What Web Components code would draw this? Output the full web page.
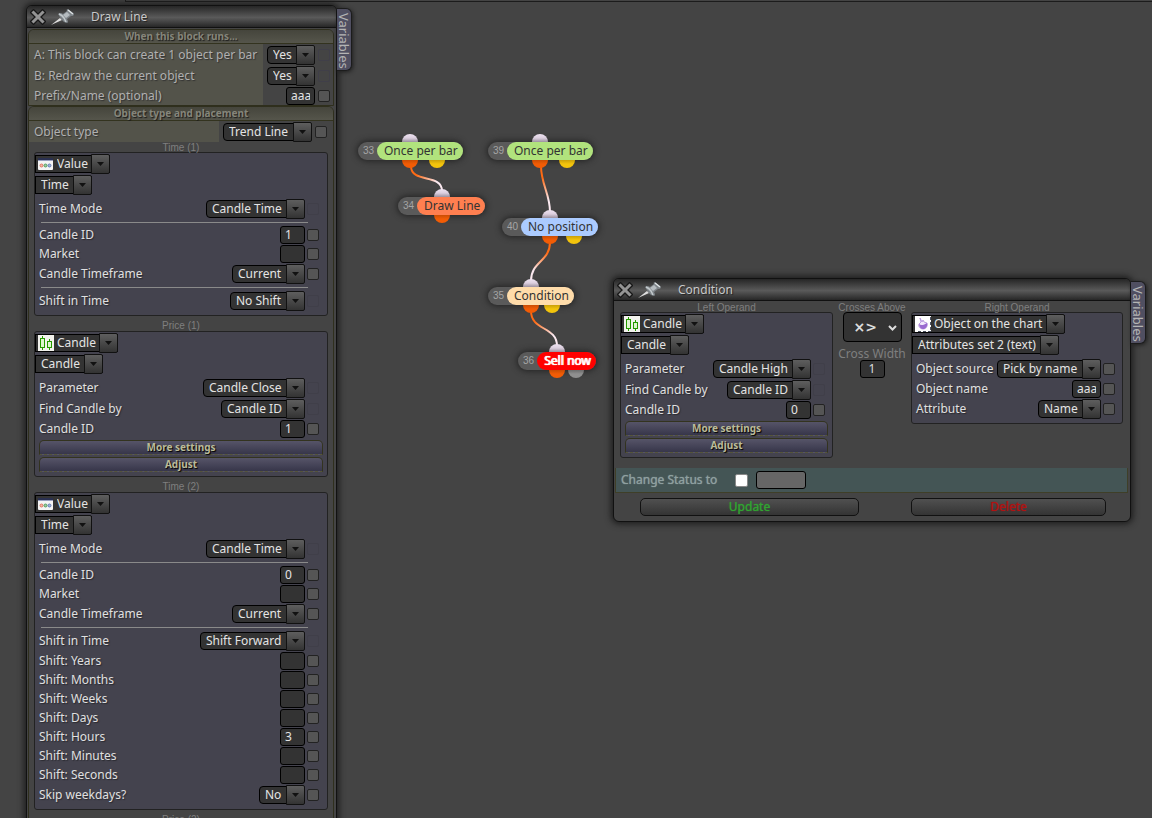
<!DOCTYPE html>
<html lang="en">
<head>
<meta charset="utf-8">
<title>Block editor</title>
<style>
  html, body { margin: 0; height: 100%; background: #444; }
  body { font: 12px/18px "Noto Sans", "Open Sans", sans-serif; color: #e0e0e0; overflow: hidden; }
</style>
</head>
<body>
<fb-desktop></fb-desktop>

<script>
const define = (name, css, render) => customElements.define(name, class extends HTMLElement {
  connectedCallback() {
    if (this.shadowRoot) return;
    const root = this.attachShadow({ mode: 'open' });
    const tpl = document.createElement('template');
    tpl.innerHTML = `<style>*{box-sizing:border-box}:host{box-sizing:border-box}${css}</style>${render(this)}`;
    root.append(tpl.content.cloneNode(true));
  }
});
const attr = (el, name, fallback = '') => el.getAttribute(name) ?? fallback;

const ICONS = {
  value: `<svg width="15" height="12" viewBox="0 0 15 12"><rect width="15" height="12" rx="1" fill="#f4f4f4"/><rect width="15" height="3" fill="#2a3050"/><rect y="2" width="15" height="1" fill="#9aa0c0"/><circle cx="3.5" cy="7.5" r="1.5" fill="#f6b5a8" stroke="#d8604a" stroke-width=".8"/><circle cx="7.5" cy="7.5" r="1.5" fill="#9ccf9c" stroke="#3f8b4c" stroke-width=".8"/><circle cx="11.5" cy="7.5" r="1.5" fill="#a3b4dc" stroke="#4d68a8" stroke-width=".8"/></svg>`,
  candle: `<svg width="16" height="16" viewBox="0 0 16 16"><rect width="16" height="16" fill="#f3f3ee"/><g fill="#dff5d0" stroke="#269a00"><path d="M4.500 1V15M11.500 4V15"/><rect x="2.500" y="3.500" width="4" height="9"/><rect x="9.500" y="6.500" width="4" height="6"/></g></svg>`,
  object: `<svg width="16" height="16" viewBox="0 0 16 16"><rect width="16" height="16" fill="#fff"/><path d="M3 15.500H16M15.500 1V16" stroke="#4b5160" stroke-dasharray="3 2" fill="none"/><path d="M5 2l2 4 1-2 1 2 3 1c1 3-1 6-4 6S3 10 4 8l2-2z" fill="#f2eafc" stroke="#b594de" stroke-width=".9"/><path d="M4 8c2 2 5 1 8-1 1 4-2 6-4 6S4 11 4 8z" fill="#9a6bd0"/></svg>`
};

/* Drop-down with a raised arrow cap; square="" gives the flush-left variant. */
define('fb-select', `
  :host { display: inline-flex; position: relative; height: 20px; align-items: center; flex: none; }
  select { appearance: none; font: inherit; line-height: 16px; color: #e4e4e4; background: #333; border: 1px solid #000; border-radius: 4px; height: 18px; margin: 0; padding: 0 22px 0 5px; outline: 0; }
  :host([square]) select { border-radius: 0; }
  :host([icon]) select { padding-left: 21px; padding-right: 21px; }
  .cap { position: absolute; right: 0; top: 0; width: 19px; height: 20px; border: 1px solid #111; border-radius: 0 2px 2px 0; background: linear-gradient(#5e5e5e, #333); pointer-events: none; display: grid; place-items: center; }
  .icon { position: absolute; left: 3px; top: 0; bottom: 0; display: grid; place-items: center; pointer-events: none; }
  svg { display: block; }
`, el => `<select aria-label="${attr(el, 'label')}"><option>${attr(el, 'value')}</option></select>
  ${el.hasAttribute('icon') ? `<span class="icon">${ICONS[attr(el, 'icon')]}</span>` : ''}
  <span class="cap"><svg width="7" height="4"><path d="M0 0H7L3.500 4z" fill="#111"/></svg></span>`);

define('fb-input', `
  :host { display: inline-flex; flex: none; }
  input { font: inherit; line-height: 16px; color: #e4e4e4; background: #333; border: 1px solid #000; border-radius: 3px; width: var(--field-width, 25px); height: 18px; margin: 0; padding: 0 4px; outline: 0; }
`, el => `<input type="text" aria-label="${attr(el, 'label')}" value="${attr(el, 'value')}">`);

define('fb-check', `
  :host { display: inline-flex; flex: none; }
  input { appearance: none; width: 12px; height: 12px; margin: 0; border: 1px solid #222; border-radius: 2px; background: #555; }
  input:disabled { background: transparent; border-color: #403f49; }
`, el => `<input type="checkbox" aria-label="${attr(el, 'label')}"${el.hasAttribute('off') ? ' disabled' : ''}>`);

/* One setting: caption on the left, a field and a tick box on the right. */
define('fb-row', `
  :host { display: flex; height: 21px; align-items: stretch; }
  :host([text]) { height: 19px; }
  label { flex: 1; display: flex; align-items: center; padding-left: 4px; white-space: nowrap; text-shadow: 1px 1px 1px #2a2a30; }
  .end { display: flex; align-items: center; gap: 2px; padding-right: var(--row-pad, 8px); }
  :host([tinted]) label { background: #53534a; color: #b0b0b0; padding-left: 5px; text-shadow: 1px 1px 1px #333; }
  :host([tinted]) .end { justify-content: flex-end; gap: 3px; width: var(--end-width, 70px); padding-right: var(--end-pad, 3px); }
`, el => `<label id="cap">${attr(el, 'label')}</label><div class="end">
  ${el.hasAttribute('text')
    ? `<fb-input label="${attr(el, 'label')}" value="${attr(el, 'text')}"></fb-input>`
    : `<fb-select label="${attr(el, 'label')}" value="${attr(el, 'select')}"></fb-select>`}
  <fb-check label="${attr(el, 'label')}"${el.hasAttribute('off') ? ' off' : ''}></fb-check></div>`);

define('fb-rule', `:host { display: block; height: 1px; margin: 3px 19px 2px 6px; background: #8a8a8a; }`, () => '');

/* Violet operand box: caption, type pickers, rows. */
define('fb-operand', `
  :host { display: block; }
  .caption { font: 10px/11px "Liberation Sans", Arial, sans-serif; text-align: center; color: #7f7f7f; padding-top: var(--caption-gap, 4px); height: var(--caption-height, 15px); }
  .box { background: #44434e; border: 1px solid #222; border-radius: 3px; padding-bottom: 4px; }
  .picks { display: flex; flex-direction: column; align-items: flex-start; gap: 1px; padding: 1px 0 3px; }
`, el => `<div class="caption">${attr(el, 'caption')}</div><div class="box"><div class="picks">
  <fb-select square icon="${attr(el, 'icon')}" label="${attr(el, 'caption')} type" value="${attr(el, 'type')}"></fb-select>
  <fb-select square label="${attr(el, 'caption')} kind" value="${attr(el, 'kind')}"></fb-select></div><slot></slot></div>`);

define('fb-more', `
  :host { display: block; padding: 2px 4px 0; }
  button { display: block; width: 100%; height: 15px; margin: 0 0 2px; padding: 0; border: 1px solid #33331f; border-bottom: 1px dashed #55553a; border-radius: 5px 5px 0 0; background: linear-gradient(#565468, #37364a); font: bold 10px/13px "Noto Sans", sans-serif; color: #bbbb99; text-shadow: 1px 1px 1px #000; }
  button:last-child { margin-bottom: 0; }
`, () => `<button type="button">More settings</button><button type="button">Adjust</button>`);

define('fb-section', `
  :host { display: block; border: 1px solid #2f2f1d; border-radius: 6px 6px 0 0; }
  h2 { margin: 0; height: 14px; font: bold 10px/13px "Noto Sans", sans-serif; text-align: center; color: #85857a; text-shadow: 1px 1px 1px #1c1c1c; background: linear-gradient(#45453c, #55554b); border-bottom: 1px solid #33331f; border-radius: 5px 5px 0 0; }
`, el => `<h2>${attr(el, 'heading')}</h2><slot></slot>`);

define('fb-window', `
  :host { display: block; position: absolute; background: #444; border: 1px solid #111; border-radius: 6px; box-shadow: 0 0 6px 2px #1d1d1d; }
  header { display: flex; align-items: center; height: 22px; padding-left: 3px; border-bottom: 1px solid #111; border-radius: 5px 5px 0 0; background: linear-gradient(#262626, #5a5a5a 55%, #272727); }
  header button { display: block; border: 0; background: none; padding: 0; margin: 0; }
  .close { width: 16px; height: 16px; }
  .pin { width: 24px; height: 18px; margin-left: 5px; }
  svg { display: block; }
  h1 { margin: 0 0 0 16px; font: inherit; color: #c8c8c8; text-shadow: 1px 1px 1px #222; }
  .tab { position: absolute; left: 100%; top: 2px; margin-left: 1px; width: 15px; height: 63px; padding: 2px 0 0; border: 1px solid #1c1c1c; border-left: 0; border-radius: 0 6px 6px 0; background: #504f61; color: #b4b4b4; box-shadow: 1px 1px 4px #1d1d1d; writing-mode: vertical-rl; font: 13px/14px "Noto Sans", sans-serif; text-align: center; }
`, el => `<header>
  <button class="close" type="button" aria-label="Close"><svg width="16" height="16" viewBox="0 0 16 16"><path d="M3.500 3.500L12.500 12.500M12.500 3.500L3.500 12.500" stroke="#181818" stroke-width="5.500" stroke-linecap="square"/><path d="M3.500 3.500L12.500 12.500M12.500 3.500L3.500 12.500" stroke="#949494" stroke-width="3" stroke-linecap="square"/></svg></button>
  <button class="pin" type="button" aria-label="Pin"><svg width="24" height="18" viewBox="0 0 24 18"><path d="M0 17L9 10l2 2z" fill="#ddd"/><path d="M7 6q2-2 5 0l4-3q-1-2 1-2l6 5q0 2-3 2l-4 3q2 3 0 4-3 0-5-3T7 6z" fill="#7d8388"/><path d="M8 6q3 1 5 4l2 4" stroke="#c3c9cc" stroke-width="1.500" fill="none"/><path d="M12 7l4-3 3 3-4 3z" fill="#b5bbbf"/><path d="M17 2l5 4" stroke="#dfe4e6" stroke-width="1.500"/></svg></button>
  <h1>${attr(el, 'heading')}</h1></header><slot></slot>
  <button class="tab" type="button">Variables</button>`);

define('fb-crossing', `
  :host { display: flex; flex-direction: column; align-items: center; color: #7f7f7f; }
  .caption { font: 10px/11px "Liberation Sans", Arial, sans-serif; padding-top: 1px; height: 11px; }
  .op { position: relative; display: flex; }
  select { appearance: none; width: 59px; height: 30px; margin: 0; padding: 0 10px; font: bold 14px/28px "DejaVu Sans", sans-serif; color: #ddd; background: #333; border: 1px solid #000; border-radius: 4px; }
  .op svg { position: absolute; right: 5px; top: 13px; pointer-events: none; }
  label { line-height: 17px; padding-top: 3px; height: 19px; white-space: nowrap; }
  input { width: 25px; height: 18px; margin: 0; padding: 0; text-align: center; font: inherit; color: #ddd; background: #333; border: 1px solid #000; border-radius: 3px; margin-top: -1px; }
`, () => `<div class="caption">Crosses Above</div>
  <div class="op"><select aria-label="Crosses Above"><option>×&gt;</option></select><svg width="9" height="6"><path d="M1 1L4.500 4.500L8 1" fill="none" stroke="#ddd" stroke-width="2"/></svg></div>
  <label for="w">Cross Width</label><input id="w" type="text" value="1">`);

define('fb-status', `
  :host { display: flex; align-items: center; height: 25px; margin: 10px 2px 0 1px; padding-left: 5px; background: #445555; border: 1px solid #3f3f28; border-top: 0; }
  label { color: #8fa0a0; text-shadow: 0 0 1px #8fa0a0; white-space: nowrap; }
  .tick { appearance: none; width: 13px; height: 13px; margin: 0 0 0 18px; background: #fff; border: 1px solid #888; border-radius: 2px; }
  .text { width: 50px; height: 18px; margin: 0 0 0 8px; padding: 0 4px; background: #666; border: 1px solid #000; border-radius: 3px; font: inherit; color: #ddd; }
`, () => `<label for="s">Change Status to</label><input class="tick" id="s" type="checkbox"><input class="text" type="text" aria-label="Status">`);

define('fb-actions', `
  :host { display: flex; gap: 52px; padding: 5px 24px 5px 26px; }
  button { flex: 9; height: 18px; margin: 0; padding: 0; font: 12px/16px "Noto Sans", sans-serif; background: linear-gradient(#505050, #343434); border: 1px solid #111; border-radius: 5px; }
  .ok { color: #31a431; text-shadow: 0 0 1px #31a431; }
  .del { flex: 8; color: #b11212; text-shadow: 0 0 1px #b11212; }
`, () => `<button class="ok" type="button">Update</button><button class="del" type="button">Delete</button>`);

/* Flow block: number, coloured name, input port on top, output ports below. */
define('fb-node', `
  :host { position: absolute; display: flex; height: 18px; }
  .port { position: absolute; width: 16px; height: 8px; margin-left: -8px; }
  .in { left: 50%; top: -8px; border-radius: 8px 8px 0 0; background: linear-gradient(#efe3f2, #dccfdf 50%, #9b909e); }
  .out { left: 50%; top: 18px; border-radius: 0 0 8px 8px; background: linear-gradient(#c94d04, #f25c05 50%); }
  .alt { left: 75%; top: 18px; border-radius: 0 0 8px 8px; background: linear-gradient(#c9a00a, #f3c40c 50%); }
  .grey { background: linear-gradient(#6c6c6c, #8f8f8f 50%); }
  .pill { display: flex; border-radius: 9px; background: #5a5a5a; box-shadow: 0 0 6px 1px #222; }
  .num { width: 19px; padding-left: 5px; font: 10px/18px "Liberation Sans", Arial, sans-serif; color: #a5a5a5; }
  .name { padding: 0 5px 0 7px; border-radius: 9px; color: #333; background: var(--tone); white-space: nowrap; }
  :host([strong]) .name { color: #fff; text-shadow: 0 0 1px #fff, 1px 0 0 #fff; }
`, el => `<span class="pill"><span class="num">${attr(el, 'num')}</span><span class="name">${attr(el, 'name')}</span></span>
  <span class="port in"></span><span class="port out"></span>
  ${el.hasAttribute('alt') ? `<span class="port alt ${attr(el, 'alt')}"></span>` : ''}`);

define('fb-desktop', `
  :host { display: block; position: relative; height: 100vh; overflow: hidden; background: #444; }
  .bar { height: 2px; margin-left: 125px; border-left: 1px solid #1c1c1c; border-bottom: 1px solid #1c1c1c; }
  .links { position: absolute; left: 0; top: 0; }
  .line { left: 26px; top: 5px; width: 311px; padding-bottom: 60px; }
  .line fb-section { margin: 1px 2px 0 1px; }
  .line fb-section + fb-section { margin-top: 0; }
  .line fb-section:last-of-type { padding-bottom: 40px; }
  .line fb-operand { margin: 0 5px; }
  .cond { left: 613px; top: 278px; width: 518px; --row-pad: 7px; }
  .operands { display: grid; grid-template-columns: 213px 1fr 212px; align-items: start; padding: 0 7px 0 6px; }
  .last { font: 10px/11px "Liberation Sans", Arial, sans-serif; text-align: center; color: #7f7f7f; padding-top: 4px; }
`, () => {
  const node = (x, y, num, name, tone, extra = '') =>
    `<fb-node style="left:${x}px;top:${y}px;--tone:${tone}" num="${num}" name="${name}" ${extra}></fb-node>`;
  const link = (id, x1, y1, x2, y2, c) =>
    `<linearGradient id="${id}" gradientUnits="userSpaceOnUse" x1="${x1}" y1="${y1}" x2="${x2}" y2="${y2}"><stop stop-color="#ff6a13"/><stop offset=".25" stop-color="#ff6a13"/><stop offset=".75" stop-color="#fbe9f0"/></linearGradient>
     <path d="M${x1} ${y1}C${x1} ${y1 + c} ${x2} ${y2 - c} ${x2} ${y2}" fill="none" stroke="url(#${id})" stroke-width="2"/>`;
  const times = `<fb-row label="Time Mode" select="Candle Time" off></fb-row><fb-rule></fb-rule>`;
  return `
  <div class="bar"></div>
  <svg class="links" width="1152" height="818" aria-hidden="true">
    ${link('a', 411, 166, 442, 191, 18)}${link('b', 541, 166, 550, 212, 18)}
    ${link('c', 550, 242, 531, 281, 20)}${link('d', 531, 311, 557, 346, 20)}
  </svg>
  ${node(358, 142, 33, 'Once per bar', '#b1e37d', 'alt')}
  ${node(398, 197, 34, 'Draw Line', '#ff7f50')}
  ${node(488, 142, 39, 'Once per bar', '#b1e37d', 'alt')}
  ${node(502, 218, 40, 'No position', '#abcbff', 'alt')}
  ${node(488, 287, 35, 'Condition', '#ffdcaa', 'alt')}
  ${node(518, 352, 36, 'Sell now', '#ff0000', 'alt="grey" strong')}

  <fb-window class="line" heading="Draw Line">
    <fb-section heading="When this block runs...">
      <fb-row tinted label="A: This block can create 1 object per bar" select="Yes" off></fb-row>
      <fb-row tinted label="B: Redraw the current object" select="Yes" off></fb-row>
      <fb-row tinted label="Prefix/Name (optional)" text="aaa" style="--field-width:29px"></fb-row>
    </fb-section>
    <fb-section heading="Object type and placement">
      <fb-row tinted label="Object type" select="Trend Line" style="--end-width:114px;--end-pad:6px"></fb-row>
      <fb-operand caption="Time (1)" icon="value" type="Value" kind="Time" style="--caption-height:10px;--caption-gap:0px">
        ${times}
        <fb-row label="Candle ID" text="1"></fb-row>
        <fb-row label="Market" text=""></fb-row>
        <fb-row label="Candle Timeframe" select="Current"></fb-row>
        <fb-rule></fb-rule>
        <fb-row label="Shift in Time" select="No Shift" off></fb-row>
      </fb-operand>
      <fb-operand caption="Price (1)" icon="candle" type="Candle" kind="Candle">
        <fb-row label="Parameter" select="Candle Close" off></fb-row>
        <fb-row label="Find Candle by" select="Candle ID" off></fb-row>
        <fb-row label="Candle ID" text="1"></fb-row>
        <fb-more></fb-more>
      </fb-operand>
      <fb-operand caption="Time (2)" icon="value" type="Value" kind="Time">
        ${times}
        <fb-row label="Candle ID" text="0"></fb-row>
        <fb-row label="Market" text=""></fb-row>
        <fb-row label="Candle Timeframe" select="Current"></fb-row>
        <fb-rule></fb-rule>
        <fb-row label="Shift in Time" select="Shift Forward" off></fb-row>
        ${['Years', 'Months', 'Weeks', 'Days', 'Hours', 'Minutes', 'Seconds'].map(u =>
          `<fb-row label="Shift: ${u}" text="${u === 'Hours' ? 3 : ''}"></fb-row>`).join('')}
        <fb-row label="Skip weekdays?" select="No"></fb-row>
      </fb-operand>
      <div class="last">Price (2)</div>
    </fb-section>
  </fb-window>

  <fb-window class="cond" heading="Condition">
    <div class="operands" style="--caption-height:11px;--caption-gap:1px">
      <fb-operand caption="Left Operand" icon="candle" type="Candle" kind="Candle">
        <fb-row label="Parameter" select="Candle High" off></fb-row>
        <fb-row label="Find Candle by" select="Candle ID" off></fb-row>
        <fb-row label="Candle ID" text="0"></fb-row>
        <fb-more></fb-more>
      </fb-operand>
      <fb-crossing></fb-crossing>
      <fb-operand caption="Right Operand" icon="object" type="Object on the chart" kind="Attributes set 2 (text)">
        <fb-row label="Object source" select="Pick by name"></fb-row>
        <fb-row label="Object name" text="aaa" style="--field-width:29px"></fb-row>
        <fb-row label="Attribute" select="Name"></fb-row>
      </fb-operand>
    </div>
    <fb-status></fb-status>
    <fb-actions></fb-actions>
  </fb-window>`;
});
</script>
</body>
</html>
